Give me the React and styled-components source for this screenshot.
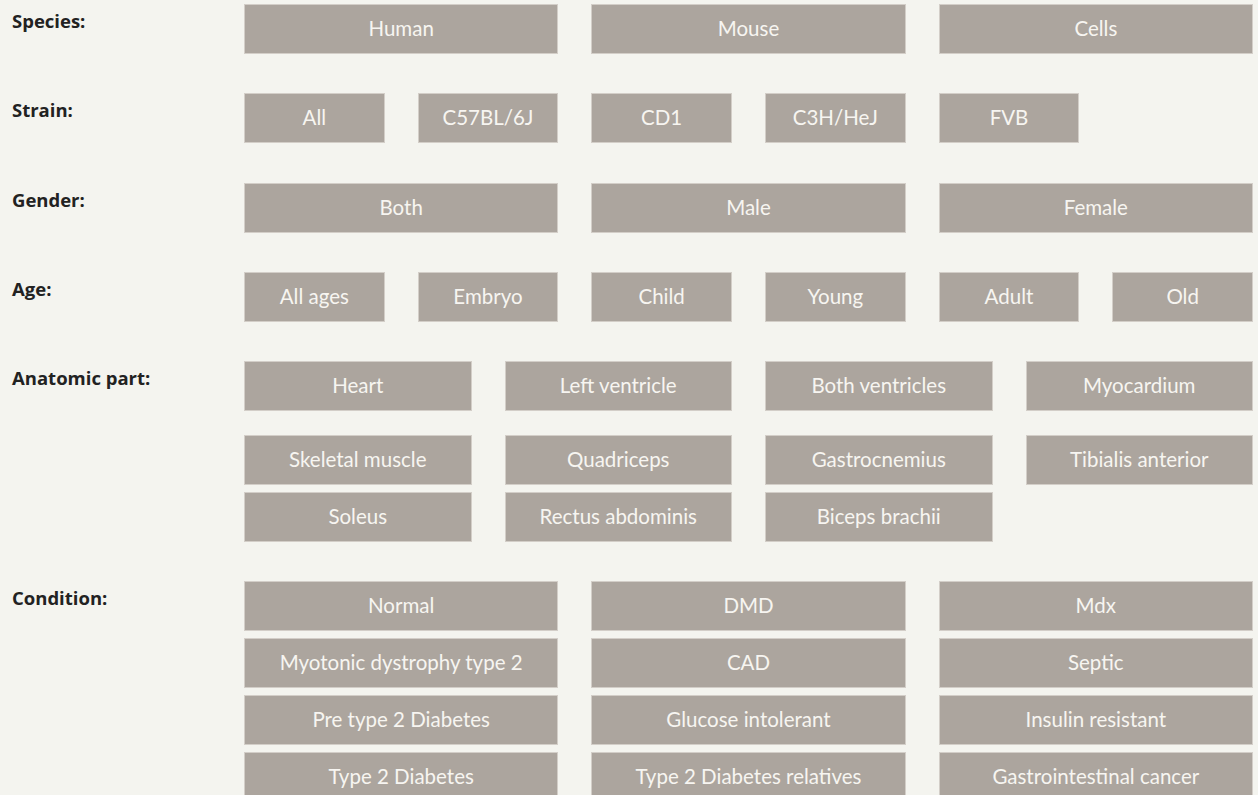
import React from "react";
import styled, { createGlobalStyle } from "styled-components";

const Global = createGlobalStyle`
  html, body { margin: 0; padding: 0; background: #f4f4ef; }
  body { font-family: "Open Sans", "Liberation Sans", sans-serif; }
`;

const Page = styled.div`
  padding: 4px 5px 0 12px;
  display: flex;
  flex-direction: column;
  gap: 39.3px;
`;

const Section = styled.section`
  display: grid;
  grid-template-columns: 232px 1009px;
  align-items: start;
`;

const Label = styled.div`
  font-family: "Open Sans", "Noto Sans", sans-serif;
  font-weight: 700;
  font-size: 18.5px;
  line-height: 24px;
  color: #222222;
  padding-top: 5px;
`;

const Groups = styled.div`
  display: flex;
  flex-direction: column;
  gap: 24px;
`;

const Grid = styled.div`
  display: grid;
  grid-template-columns: repeat(${(p) => p.$cols}, 1fr);
  column-gap: 33px;
  row-gap: 6.8px;
`;

const Option = styled.button`
  box-sizing: border-box;
  height: 50px;
  margin: 0;
  padding: 0 6px 2px;
  border: 1px solid #d3cec8;
  border-radius: 0;
  background: #aca59e;
  color: #f7f5f1;
  font-family: "Lato", "Open Sans", sans-serif;
  font-size: 20.5px;
  font-weight: 400;
  text-align: center;
  white-space: nowrap;
  cursor: pointer;
`;

const sections = [
  { label: "Species:", groups: [{ cols: 3, items: ["Human", "Mouse", "Cells"] }] },
  { label: "Strain:", groups: [{ cols: 6, items: ["All", "C57BL/6J", "CD1", "C3H/HeJ", "FVB"] }] },
  { label: "Gender:", groups: [{ cols: 3, items: ["Both", "Male", "Female"] }] },
  { label: "Age:", groups: [{ cols: 6, items: ["All ages", "Embryo", "Child", "Young", "Adult", "Old"] }] },
  {
    label: "Anatomic part:",
    groups: [
      { cols: 4, items: ["Heart", "Left ventricle", "Both ventricles", "Myocardium"] },
      {
        cols: 4,
        items: [
          "Skeletal muscle",
          "Quadriceps",
          "Gastrocnemius",
          "Tibialis anterior",
          "Soleus",
          "Rectus abdominis",
          "Biceps brachii",
        ],
      },
    ],
  },
  {
    label: "Condition:",
    groups: [
      {
        cols: 3,
        items: [
          "Normal",
          "DMD",
          "Mdx",
          "Myotonic dystrophy type 2",
          "CAD",
          "Septic",
          "Pre type 2 Diabetes",
          "Glucose intolerant",
          "Insulin resistant",
          "Type 2 Diabetes",
          "Type 2 Diabetes relatives",
          "Gastrointestinal cancer",
        ],
      },
    ],
  },
];

export default function App() {
  return (
    <>
      <Global />
      <Page>
        {sections.map((s) => (
          <Section key={s.label}>
            <Label>{s.label}</Label>
            <Groups>
              {s.groups.map((g, i) => (
                <Grid key={i} $cols={g.cols}>
                  {g.items.map((it) => (
                    <Option key={it}>{it}</Option>
                  ))}
                </Grid>
              ))}
            </Groups>
          </Section>
        ))}
      </Page>
    </>
  );
}
